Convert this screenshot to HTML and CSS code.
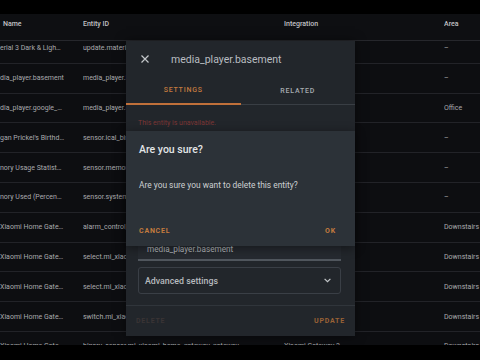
FILE: index.html
```html
<!DOCTYPE html>
<html lang="en">
<head>
  <meta charset="UTF-8" />
  <title>Entities</title>
  <link rel="stylesheet" href="styles.css">
</head>
<body>
  <div class="screen">
    <!-- TABELA -->
    <div class="table">
      <div class="row head">
        <div class="cell first">Name</div>
        <div class="cell">Entity ID</div>
        <div class="cell">Integration</div>
        <div class="cell">Area</div>
      </div>
      <div class="rows">
        <div class="row"><div class="cell">erial 3 Dark &amp; Ligh…</div><div class="cell">update.material_3_dark_light</div><div class="cell">HACS</div><div class="cell">–</div></div>
        <div class="row"><div class="cell">dia_player.basement</div><div class="cell">media_player.basement</div><div class="cell">Cast</div><div class="cell">–</div></div>
        <div class="row"><div class="cell">dia_player.google_…</div><div class="cell">media_player.google_home</div><div class="cell">Cast</div><div class="cell">Office</div></div>
        <div class="row"><div class="cell">gan Prickel's Birthd…</div><div class="cell">sensor.ical_birthdays</div><div class="cell">iCal</div><div class="cell">–</div></div>
        <div class="row"><div class="cell">nory Usage Statist…</div><div class="cell">sensor.memory_usage</div><div class="cell">System</div><div class="cell">–</div></div>
        <div class="row"><div class="cell">nory Used (Percen…</div><div class="cell">sensor.system_memory</div><div class="cell">System</div><div class="cell">–</div></div>
        <div class="row"><div class="cell">Xiaomi Home Gate…</div><div class="cell">alarm_control_panel.mi</div><div class="cell">Gateway</div><div class="cell">Downstairs</div></div>
        <div class="row"><div class="cell">Xiaomi Home Gate…</div><div class="cell">select.mi_xiaomi_home</div><div class="cell">Gateway</div><div class="cell">Downstairs</div></div>
        <div class="row"><div class="cell">Xiaomi Home Gate…</div><div class="cell">select.mi_xiaomi_home</div><div class="cell">Gateway</div><div class="cell">Downstairs</div></div>
        <div class="row"><div class="cell">Xiaomi Home Gate…</div><div class="cell">switch.mi_xiaomi_home</div><div class="cell">Gateway</div><div class="cell">Downstairs</div></div>
        <div class="row"><div class="cell">Xiaomi Home Gate…</div><div class="cell">binary_sensor.mi_xiaomi_home_gateway_gateway</div><div class="cell">Xiaomi Gateway 3</div><div class="cell">Downstairs</div></div>
      </div>
    </div>

    <!-- DIALOGO DA ENTIDADE -->
    <div class="dialog">
      <div class="dlg-head">
        <svg class="close-icon" width="8" height="8" viewBox="0 0 8 8">
          <path d="M0.5 0.5 L7.5 7.5 M7.5 0.5 L0.5 7.5" stroke="#c4c7ca" stroke-width="1.2" fill="none"/>
        </svg>
        <div class="dlg-title">media_player.basement</div>
      </div>
      <div class="tabs">
        <div class="tab active">SETTINGS</div>
        <div class="tab">RELATED</div>
      </div>
      <div class="dlg-body">
        <div class="unavail">This entity is unavailable.</div>
        <div class="field">media_player.basement</div>
        <div class="advanced">
          <span>Advanced settings</span>
          <svg width="7" height="5" viewBox="0 0 7 5">
            <path d="M0.6 0.8 L3.5 3.7 L6.4 0.8" stroke="#c4c7ca" stroke-width="1.2" fill="none"/>
          </svg>
        </div>
      </div>
      <div class="dlg-footer">
        <div class="btn delete">DELETE</div>
        <div class="btn update">UPDATE</div>
      </div>

      <!-- CONFIRMACAO -->
      <div class="confirm">
        <div class="confirm-title">Are you sure?</div>
        <div class="confirm-text">Are you sure you want to delete this entity?</div>
        <div class="confirm-actions">
          <div class="btn orange">CANCEL</div>
          <div class="btn orange">OK</div>
        </div>
      </div>
    </div>
  </div>
</body>
</html>
```

FILE: styles.css
```css
body {
  margin: 0;
  background-color: #000;
  font-family: Roboto, "Noto Sans", sans-serif;
  width: 480px;
  height: 360px;
  overflow: hidden;
}

.screen {
  margin-top: 14px;
  height: 331px;
  position: relative;
  overflow: hidden;
  background-color: #0d0e11;
}

.row {
  display: grid;
  grid-template-columns: 83px 201px 160px 36px;
  height: 29.8px;
  align-items: center;
  border-bottom: 1px solid #222328;
  box-sizing: border-box;
  font-size: 7px;
  color: #a9aaad;
}

.cell {
  white-space: nowrap;
  overflow: hidden;
}

.head {
  height: 27px;
  align-items: start;
  padding-top: 6px;
  font-weight: 500;
  color: #c0c1c4;
  background-color: #0e0f12;
  position: relative;
  z-index: 1;
  border-bottom-color: #26272c;
}

.head .first {
  padding-left: 3px;
}

.rows {
  margin-top: -7px;
}

/* dialogo */
.dialog {
  position: absolute;
  left: 126px;
  top: 27px;
  width: 229px;
  height: 295px;
  background-color: #22262b;
  display: flex;
  flex-direction: column;
  box-shadow: 0 0 10px rgba(0, 0, 0, 0.5);
  z-index: 2;
}

.dlg-head {
  height: 36px;
  display: flex;
  align-items: center;
  padding-left: 15px;
  gap: 22px;
  flex-shrink: 0;
}

.close-icon {
  display: block;
}

.dlg-title {
  font-size: 10.5px;
  color: #b9bdc1;
}

.tabs {
  display: flex;
  height: 28px;
  border-bottom: 1px solid #393e44;
  box-sizing: border-box;
  flex-shrink: 0;
}

.tab {
  flex: 1;
  display: flex;
  align-items: center;
  justify-content: center;
  font-size: 7px;
  font-weight: 500;
  letter-spacing: 0.8px;
  color: #a7abaf;
  box-sizing: border-box;
}

.tab.active {
  color: #c27a3f;
  border-bottom: 2px solid #c0703a;
  margin-bottom: -1px;
}

.dlg-body {
  flex: 1;
  padding: 0 14px 0 12px;
  display: flex;
  flex-direction: column;
}

.unavail {
  margin-top: 13px;
  font-size: 7px;
  line-height: 10px;
  color: #7d3636;
}

.field {
  margin-top: 108px;
  height: 25px;
  box-sizing: border-box;
  background-color: #262a30;
  border-bottom: 2px solid #50565d;
  display: flex;
  align-items: flex-end;
  padding: 0 9px 5px;
  font-size: 8.2px;
  color: #b4b8bc;
}

.advanced {
  margin-top: 6px;
  height: 27px;
  box-sizing: border-box;
  border: 1px solid #3a3f46;
  border-radius: 3px;
  display: flex;
  align-items: center;
  justify-content: space-between;
  padding: 0 9px 0 6px;
  font-size: 8.8px;
  font-weight: 500;
  color: #b6babe;
}

.advanced svg {
  display: block;
}

.dlg-footer {
  height: 30px;
  border-top: 1px solid #30353b;
  display: flex;
  align-items: center;
  justify-content: space-between;
  padding: 0 10px;
  flex-shrink: 0;
}

.btn {
  font-size: 7px;
  font-weight: 700;
  letter-spacing: 0.8px;
}

.delete { color: #3a3435; }
.update { color: #9a6236; }
.orange { color: #c47b3e; }

/* confirmacao */
.confirm {
  position: absolute;
  left: 0;
  right: 0;
  top: 90px;
  height: 115px;
  background-color: #2c3238;
  padding: 0 19px 0 13px;
  box-sizing: border-box;
  display: flex;
  flex-direction: column;
  box-shadow: 0 2px 10px rgba(0, 0, 0, 0.45);
}

.confirm-title {
  margin-top: 13px;
  font-size: 10.5px;
  line-height: 12px;
  font-weight: 500;
  color: #e3e5e7;
}

.confirm-text {
  margin-top: 24px;
  font-size: 8.4px;
  line-height: 10px;
  color: #cdd0d2;
}

.confirm-actions {
  margin-top: 36px;
  line-height: 10px;
  display: flex;
  justify-content: space-between;
}
```
